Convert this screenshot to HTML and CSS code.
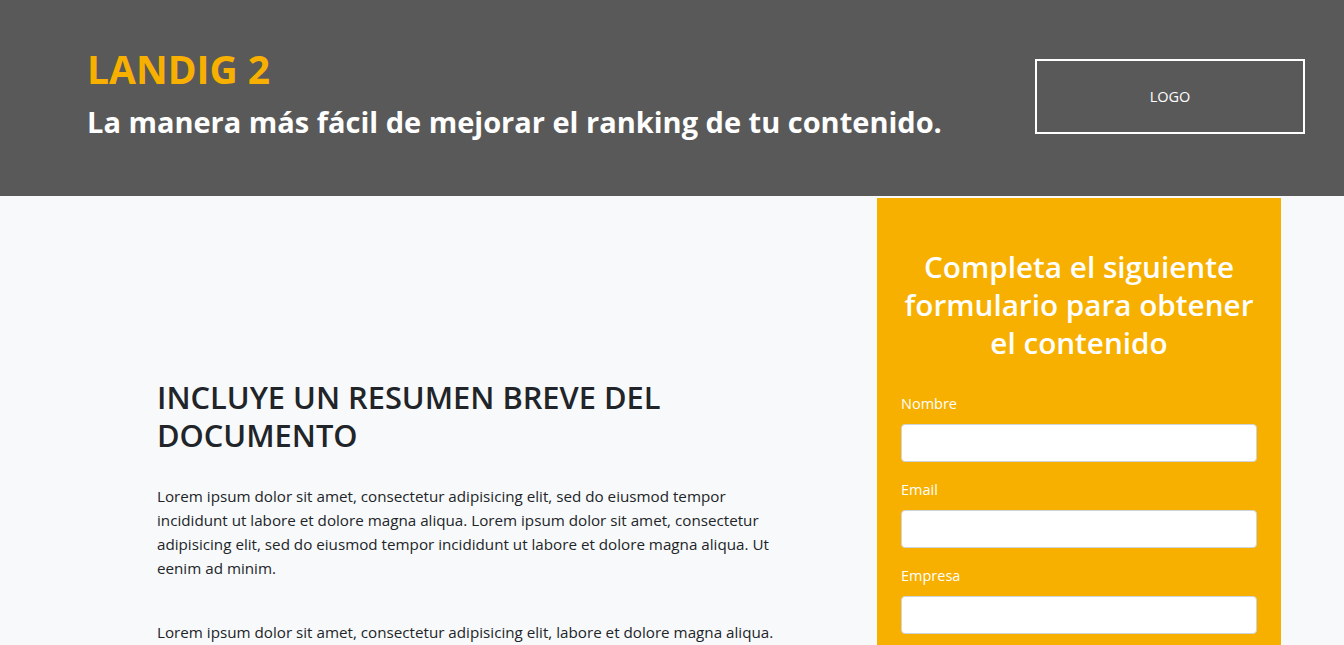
FILE: index.html
```html
<!DOCTYPE html>
<html lang="es">
<head>
<meta charset="utf-8">
<title>Landig 2</title>
<link rel="stylesheet" href="styles.css">
</head>
<body>
<header class="hero">
  <div class="hero-text">
    <h1 class="hero-title">LANDIG 2</h1>
    <h3 class="hero-sub">La manera más fácil de mejorar el ranking de tu contenido.</h3>
  </div>
  <div class="logo-box">LOGO</div>
</header>
<main class="content">
  <section class="summary">
    <h2 class="summary-title">INCLUYE UN RESUMEN BREVE DEL DOCUMENTO</h2>
    <p class="summary-text">Lorem ipsum dolor sit amet, consectetur adipisicing elit, sed do eiusmod tempor incididunt ut labore et dolore magna aliqua. Lorem ipsum dolor sit amet, consectetur adipisicing elit, sed do eiusmod tempor incididunt ut labore et dolore magna aliqua. Ut eenim ad minim.</p>
    <p class="summary-text">Lorem ipsum dolor sit amet, consectetur adipisicing elit, labore et dolore magna aliqua.</p>
  </section>
  <aside class="form-card">
    <h2 class="form-title">Completa el siguiente formulario para obtener el contenido</h2>
    <form class="form">
      <label class="field"><span class="field-label">Nombre</span><input class="field-input" type="text"></label>
      <label class="field"><span class="field-label">Email</span><input class="field-input" type="email"></label>
      <label class="field"><span class="field-label">Empresa</span><input class="field-input" type="text"></label>
    </form>
  </aside>
</main>
</body>
</html>
```
FILE: styles.css
```css
* { box-sizing: border-box; }
html, body { margin: 0; padding: 0; }
body {
  font-family: "Open Sans", "Noto Sans", sans-serif;
  background: #f8f9fa;
  color: #212529;
  overflow: hidden;
  height: 645px;
}
.hero {
  background: #595959;
  height: 196px;
  display: flex;
  align-items: center;
  justify-content: space-between;
  padding: 0 39px 0 87px;
}
.hero-text { padding-bottom: 10px; }
.hero-title {
  margin: 0 0 12px;
  color: #f8b000;
  font-size: 39px;
  font-weight: 700;
  line-height: 1.2;
}
.hero-sub {
  margin: 0;
  color: #ffffff;
  font-size: 29px;
  font-weight: 700;
  line-height: 1.2;
}
.logo-box {
  width: 270px;
  height: 75px;
  margin-top: -3px;
  border: 2px solid #ffffff;
  color: #ffffff;
  font-size: 14.5px;
  display: flex;
  align-items: center;
  justify-content: center;
}
.content {
  display: flex;
  align-items: flex-start;
}
.summary {
  flex: 1;
  padding: 182px 94px 0 157px;
}
.summary-title {
  margin: 0 0 30px;
  font-size: 30.8px;
  font-weight: 600;
  line-height: 38px;
}
.summary-text {
  margin: 0 0 40px;
  font-size: 15.2px;
  line-height: 24px;
}
.form-card {
  width: 404px;
  margin: 2px 63px 0 0;
  background: #f8b000;
  padding: 50px 24px 40px;
  color: #ffffff;
}
.form-title {
  margin: 0 0 31px;
  text-align: center;
  font-size: 29.7px;
  font-weight: 600;
  line-height: 38px;
}
.form { display: flex; flex-direction: column; gap: 17px; }
.field { display: flex; flex-direction: column; gap: 9px; }
.field-label { font-size: 14.5px; line-height: 22px; }
.field-input {
  height: 38px;
  border: 1px solid #ced4da;
  border-radius: 4px;
  background: #fff;
  font: inherit;
  padding: 6px 12px;
}
```
